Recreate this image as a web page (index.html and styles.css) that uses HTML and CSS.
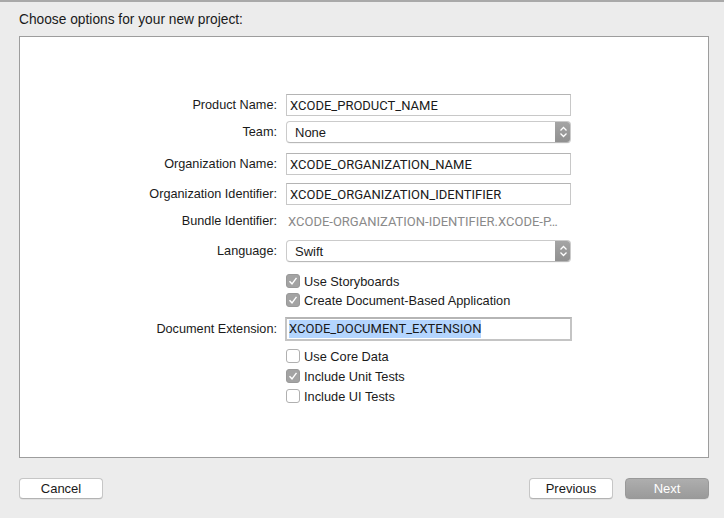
FILE: index.html
```html
<!DOCTYPE html>
<html>
<head>
<meta charset="utf-8">
<link rel="stylesheet" href="styles.css">
</head>
<body>
<div class="window">
  <div class="title">Choose options for your new project:</div>
  <div class="panel">
    <div class="form">
      <div class="row r-product">
        <div class="label">Product Name:</div>
        <div class="field"><span>XCODE_PRODUCT_NAME</span></div>
      </div>
      <div class="row r-team">
        <div class="label">Team:</div>
        <div class="popup"><span class="pv">None</span><span class="arrows"><svg width="15" height="20" viewBox="0 0 15 20"><path d="M4.5 8.5 L7.5 5.5 L10.5 8.5 M4.5 11.5 L7.5 14.5 L10.5 11.5" fill="none" stroke="#fff" stroke-width="1.3"/></svg></span></div>
      </div>
      <div class="row r-orgname">
        <div class="label">Organization Name:</div>
        <div class="field"><span>XCODE_ORGANIZATION_NAME</span></div>
      </div>
      <div class="row r-orgid">
        <div class="label">Organization Identifier:</div>
        <div class="field"><span>XCODE_ORGANIZATION_IDENTIFIER</span></div>
      </div>
      <div class="row r-bundle">
        <div class="label">Bundle Identifier:</div>
        <div class="static">XCODE-ORGANIZATION-IDENTIFIER.XCODE-P…</div>
      </div>
      <div class="row r-lang">
        <div class="label">Language:</div>
        <div class="popup"><span class="pv">Swift</span><span class="arrows"><svg width="15" height="20" viewBox="0 0 15 20"><path d="M4.5 8.5 L7.5 5.5 L10.5 8.5 M4.5 11.5 L7.5 14.5 L10.5 11.5" fill="none" stroke="#fff" stroke-width="1.3"/></svg></span></div>
      </div>
      <div class="row r-story">
        <div class="label"></div>
        <div class="check on"><span class="box"><svg width="14" height="14" viewBox="0 0 14 14"><path d="M3.5 7.2 L6 9.8 L10.5 3.8" fill="none" stroke="#fff" stroke-width="1.4"/></svg></span><span>Use Storyboards</span></div>
      </div>
      <div class="row r-doc">
        <div class="label"></div>
        <div class="check on"><span class="box"><svg width="14" height="14" viewBox="0 0 14 14"><path d="M3.5 7.2 L6 9.8 L10.5 3.8" fill="none" stroke="#fff" stroke-width="1.4"/></svg></span><span>Create Document-Based Application</span></div>
      </div>
      <div class="row r-ext">
        <div class="label">Document Extension:</div>
        <div class="field focus"><span class="sel">XCODE_DOCUMENT_EXTENSION</span></div>
      </div>
      <div class="row r-core">
        <div class="label"></div>
        <div class="check"><span class="box"></span><span>Use Core Data</span></div>
      </div>
      <div class="row r-unit">
        <div class="label"></div>
        <div class="check on"><span class="box"><svg width="14" height="14" viewBox="0 0 14 14"><path d="M3.5 7.2 L6 9.8 L10.5 3.8" fill="none" stroke="#fff" stroke-width="1.4"/></svg></span><span>Include Unit Tests</span></div>
      </div>
      <div class="row r-ui">
        <div class="label"></div>
        <div class="check"><span class="box"></span><span>Include UI Tests</span></div>
      </div>
    </div>
  </div>
  <div class="buttons">
    <div class="btn">Cancel</div>
    <div class="spacer"></div>
    <div class="btn">Previous</div>
    <div class="btn next">Next</div>
  </div>
</div>
</body>
</html>
```
FILE: styles.css
```css
* { box-sizing: border-box; }
html, body {
  margin: 0;
  padding: 0;
  background: #ececec;
}
body {
  font-family: "Liberation Sans", Arial, sans-serif;
  font-size: 13px;
  color: #1a1a1a;
}
.window {
  width: 724px;
  height: 518px;
  border-top: 2px solid #a9a9a9;
  padding: 0 15px 0 19px;
  display: flex;
  flex-direction: column;
}
.title {
  height: 34px;
  padding-top: 10px;
  line-height: 16px;
  font-size: 13.75px;
}
.panel {
  width: 690px;
  height: 422px;
  background: #fff;
  border: 1px solid #9d9d9d;
}
.form {
  display: flex;
  flex-direction: column;
  padding-top: 57px;
}
.row {
  display: flex;
  align-items: center;
  height: 22px;
}
.label {
  width: 257px;
  text-align: right;
  margin-right: 9px;
  white-space: nowrap;
  font-size: 12.7px;
}
.field {
  width: 285px;
  height: 22px;
  border: 1px solid #c8c8c8;
  border-top-color: #b4b4b4;
  padding: 0 0 0 3px;
  display: flex;
  align-items: center;
  white-space: nowrap;
  overflow: hidden;
  font-family: Roboto, "Liberation Sans", sans-serif;
  font-size: 13px;
}
.field.focus {
  width: 287px;
  height: 24px;
  margin-left: -1px;
  border: 2px solid #c4c4c4;
  border-top-color: #b5b5b5;
  padding-left: 2px;
}
.sel {
  background: #b4d5fe;
  padding: 1px 0;
  line-height: 16px;
}
.popup {
  width: 285px;
  height: 22px;
  border: 1px solid #cbcbcb;
  border-bottom-color: #b8b8b8;
  border-radius: 4px;
  display: flex;
  align-items: center;
  overflow: hidden;
  box-shadow: 0 0.5px 0 rgba(0,0,0,0.08);
}
.pv {
  flex: 1;
  padding-left: 8px;
}
.arrows {
  width: 16px;
  height: 22px;
  background: linear-gradient(#a6a6a6, #8f8f8f);
  display: flex;
  align-items: center;
  justify-content: center;
  margin-right: -1px;
}
.static {
  width: 285px;
  color: #8a8a8a;
  white-space: nowrap;
  padding-left: 2px;
  font-family: Roboto, "Liberation Sans", sans-serif;
  font-size: 13px;
}
.check {
  display: flex;
  align-items: center;
  gap: 4px;
  white-space: nowrap;
  font-size: 12.8px;
}
.box {
  width: 14px;
  height: 14px;
  border: 1px solid #b0b0b0;
  border-radius: 3px;
  background: #fff;
  display: block;
}
.box svg {
  display: block;
  margin: -1px;
}
.check.on .box {
  background: #a3a3a3;
  border-color: #999;
}
.row.r-team { margin-top: 5px; }
.row.r-orgname { margin-top: 10px; }
.row.r-orgid { margin-top: 8px; }
.row.r-bundle { margin-top: 6px; height: 20px; }
.row.r-lang { margin-top: 9px; }
.row.r-story { margin-top: 10px; height: 18px; }
.row.r-doc { margin-top: 1px; height: 18px; }
.row.r-ext { margin-top: 8px; height: 24px; }
.row.r-core { margin-top: 6px; height: 18px; }
.row.r-unit { margin-top: 2px; height: 18px; }
.row.r-ui { margin-top: 2px; height: 18px; }

.buttons {
  display: flex;
  align-items: center;
  margin-top: 20px;
  width: 690px;
}
.spacer { flex: 1; }
.btn {
  width: 84px;
  height: 21px;
  border: 1px solid #c6c6c6;
  border-bottom-color: #b3b3b3;
  border-radius: 4px;
  background: #fff;
  display: flex;
  align-items: center;
  justify-content: center;
  box-shadow: 0 0.5px 0 rgba(0,0,0,0.1);
}
.btn.next {
  margin-left: 12px;
  background: linear-gradient(#aeaeae, #9a9a9a);
  border-color: #999;
  color: #fff;
}
```
